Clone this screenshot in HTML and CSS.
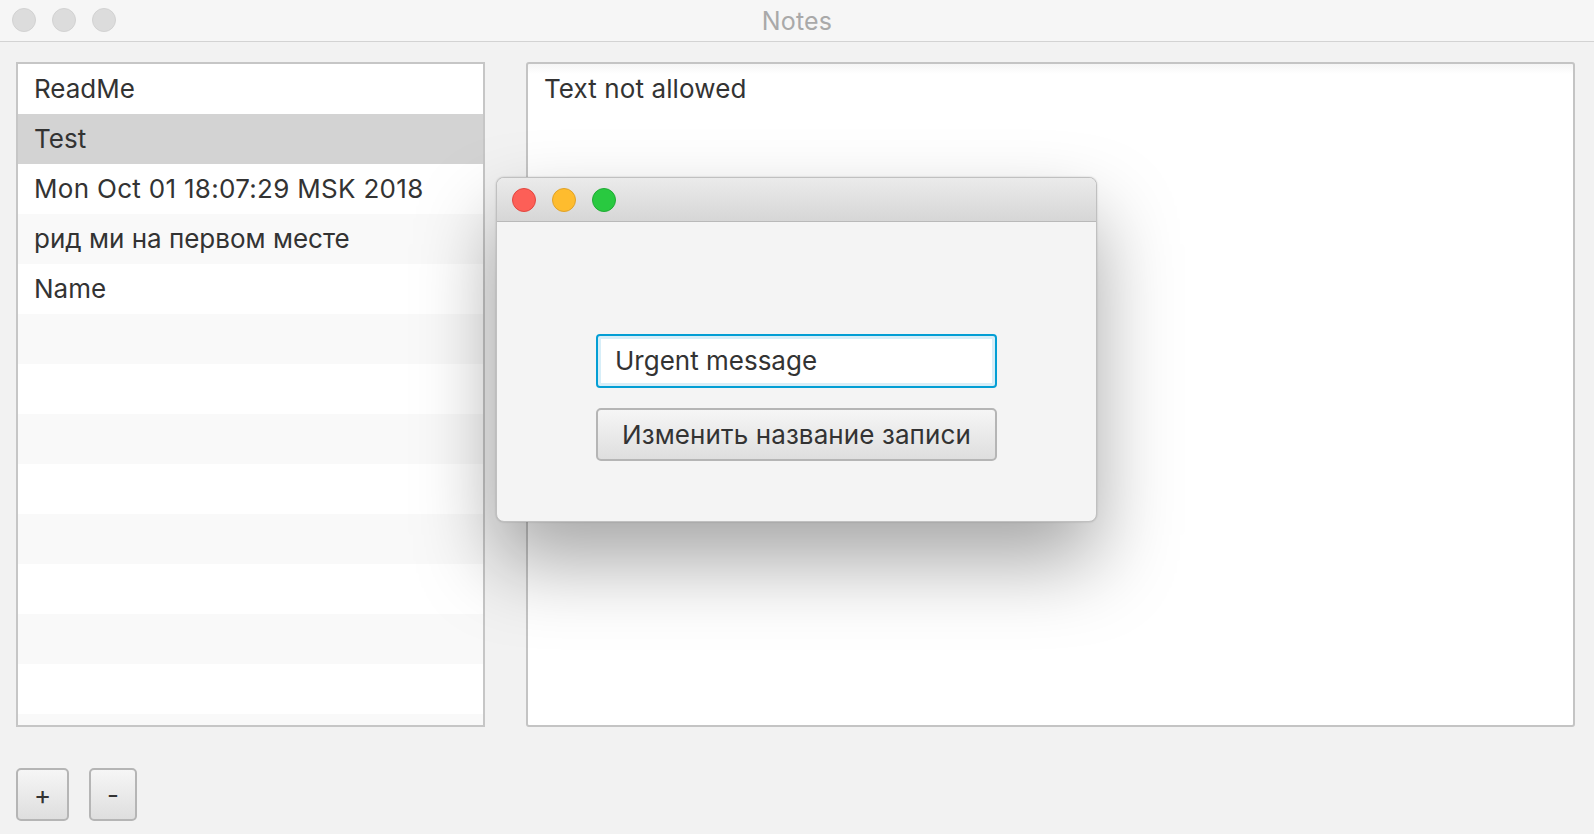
FILE: index.html
```html
<!DOCTYPE html>
<html>
<head>
<meta charset="utf-8">
<link rel="stylesheet" href="styles.css">
</head>
<body>
<div class="window">
  <div class="titlebar">
    <div class="lights">
      <span class="light gray"></span>
      <span class="light gray"></span>
      <span class="light gray"></span>
    </div>
    <div class="title">Notes</div>
  </div>
  <div class="content">
    <div class="panes">
      <div class="list">
        <div class="row">ReadMe</div>
        <div class="row selected">Test</div>
        <div class="row wide-num">Mon Oct 01 18:07:29 MSK 2018</div>
        <div class="row odd">рид ми на первом месте</div>
        <div class="row">Name</div>
        <div class="row odd"></div>
        <div class="row"></div>
        <div class="row odd"></div>
        <div class="row"></div>
        <div class="row odd"></div>
        <div class="row"></div>
        <div class="row odd"></div>
        <div class="row"></div>
        <div class="row odd"></div>
      </div>
      <div class="editor">Text not allowed</div>
    </div>
    <div class="actions">
      <button class="btn small plus">+</button>
      <button class="btn small minus">-</button>
    </div>
  </div>
  <div class="dialog">
    <div class="dtitlebar">
      <span class="light red"></span>
      <span class="light yellow"></span>
      <span class="light green"></span>
    </div>
    <div class="dbody">
      <div class="field">Urgent message</div>
      <button class="btn wide">Изменить название записи</button>
    </div>
  </div>
</div>
</body>
</html>
```
FILE: styles.css
```css
html, body {
  margin: 0;
  padding: 0;
}
body {
  width: 1594px;
  height: 834px;
  overflow: hidden;
  background: #f2f2f2;
  font-family: Inter, "Noto Sans", sans-serif;
  color: #333;
}
.window {
  position: relative;
  width: 1594px;
  height: 834px;
}
.titlebar {
  height: 41px;
  background: #f6f6f6;
  border-bottom: 1px solid #d3d3d3;
  display: flex;
  align-items: center;
  justify-content: center;
  position: relative;
}
.lights {
  position: absolute;
  left: 12px;
  top: 8px;
  display: flex;
  gap: 16px;
}
.light {
  display: block;
  width: 24px;
  height: 24px;
  border-radius: 50%;
  box-sizing: border-box;
}
.light.gray {
  background: #dcdcdc;
  border: 1px solid #d2d2d2;
}
.title {
  font-size: 25px;
  color: #a9a9a9;
  letter-spacing: 0.2px;
}
.content {
  padding: 20px 19px 0 16px;
}
.panes {
  display: flex;
  gap: 41px;
  height: 665px;
}
.list {
  width: 469px;
  box-sizing: border-box;
  border: 2px solid #c6c6c6;
  background: #fff;
  overflow: hidden;
}
.row {
  height: 50px;
  line-height: 50px;
  padding-left: 16px;
  font-size: 26px;
  background: #fff;
  white-space: nowrap;
}
.row.wide-num {
  letter-spacing: 0.3px;
}
.row.odd {
  background: #f9f9f9;
}
.row.selected {
  background: #d3d3d3;
}
.editor {
  flex: 1;
  box-sizing: border-box;
  border: 2px solid #c4c4c4;
  border-radius: 3px;
  background: linear-gradient(#f5f5f5, #fff 10px);
  padding: 9px 16px;
  font-size: 26px;
  letter-spacing: 0.1px;
  line-height: 32px;
}
.actions {
  display: flex;
  gap: 20px;
  margin-top: 41px;
}
.btn {
  font-family: Inter, "Noto Sans", sans-serif;
  color: #333;
  box-sizing: border-box;
  border: 2px solid #b5b5b5;
  border-radius: 5px;
  background: linear-gradient(#f6f6f6, #dedede);
  padding: 0;
}
.btn.small {
  height: 53px;
  font-size: 26px;
}
.btn.plus {
  width: 53px;
}
.btn.minus {
  width: 48px;
}
.dialog {
  position: absolute;
  left: 496px;
  top: 177px;
  width: 601px;
  height: 345px;
  box-sizing: border-box;
  border-radius: 8px;
  background: #f4f4f4;
  border: 1px solid #c0c0c0;
  box-shadow: 0 40px 80px rgba(0, 0, 0, 0.35), 0 0 2px rgba(0,0,0,0.2);
  overflow: hidden;
}
.dtitlebar {
  height: 43px;
  background: linear-gradient(#ebebeb, #d6d6d6);
  border-bottom: 1px solid #b9b9b9;
  display: flex;
  align-items: center;
  gap: 16px;
  padding-left: 15px;
}
.light.red {
  background: #fd5f57;
  border: 1px solid #e2463f;
}
.light.yellow {
  background: #febc2e;
  border: 1px solid #e0a229;
}
.light.green {
  background: #29c940;
  border: 1px solid #20ab34;
}
.dbody {
  display: flex;
  flex-direction: column;
  align-items: center;
  padding-top: 112px;
  gap: 20px;
}
.field {
  width: 401px;
  height: 54px;
  box-sizing: border-box;
  border: 2px solid #039ed4;
  box-shadow: inset 0 0 0 3px #d7eef8;
  border-radius: 4px;
  background: #fff;
  font-size: 26px;
  line-height: 50px;
  padding-left: 17px;
}
.btn.wide {
  width: 401px;
  height: 53px;
  font-size: 26px;
  letter-spacing: 0.1px;
}
```
